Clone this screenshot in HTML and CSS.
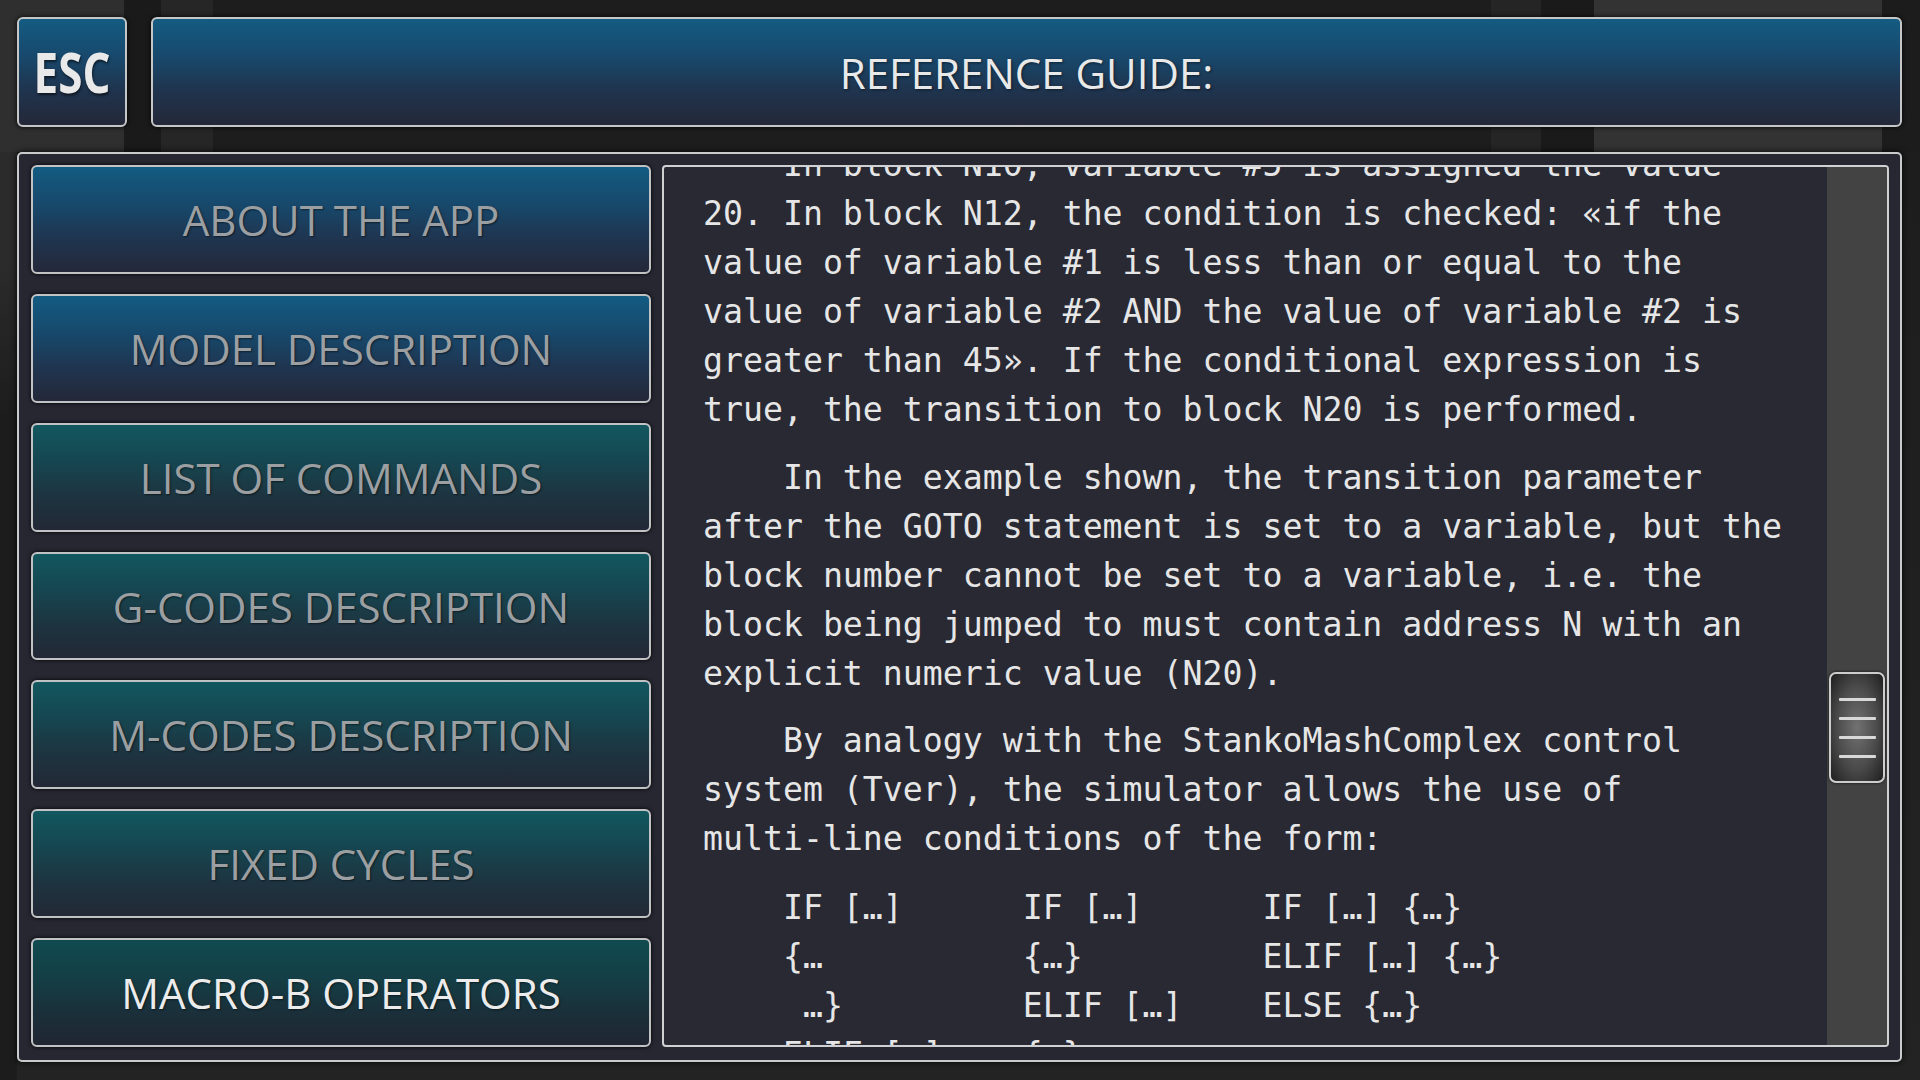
FILE: index.html
```html
<!DOCTYPE html>
<html lang="en">
<head>
<meta charset="utf-8">
<title>Reference Guide</title>
<link rel="stylesheet" href="styles.css">
</head>
<body>
<header class="top">
  <div class="esc"><span class="esc-label">ESC</span></div>
  <div class="title">REFERENCE GUIDE:</div>
</header>
<main class="panel">
  <nav class="menu">
    <div class="btn blue">ABOUT THE APP</div>
    <div class="btn blue">MODEL DESCRIPTION</div>
    <div class="btn teal">LIST OF COMMANDS</div>
    <div class="btn teal">G-CODES DESCRIPTION</div>
    <div class="btn teal">M-CODES DESCRIPTION</div>
    <div class="btn teal">FIXED CYCLES</div>
    <div class="btn teal active">MACRO-B OPERATORS</div>
  </nav>
  <section class="viewer">
    <div class="text">
      <p class="para">In block N10, variable #5 is assigned the value 20. In block N12, the condition is checked: «if the value of variable #1 is less than or equal to the value of variable #2 AND the value of variable #2 is greater than 45». If the conditional expression is true, the transition to block N20 is performed.</p>
      <p class="para">In the example shown, the transition parameter after the GOTO statement is set to a variable, but the block number cannot be set to a variable, i.e. the block being jumped to must contain address N with an explicit numeric value (N20).</p>
      <p class="para">By analogy with the StankoMashComplex control system (Tver), the simulator allows the use of <span class="nowrap">multi-line</span> conditions of the form:</p>
<pre class="code">    IF […]      IF […]      IF […] {…}
    {…          {…}         ELIF […] {…}
     …}         ELIF […]    ELSE {…}
    ELIF […]    {…}
    {…          ELSE {…}
     …}</pre>
    </div>
    <div class="track">
      <div class="thumb"><i></i><i></i><i></i><i></i></div>
    </div>
  </section>
</main>
</body>
</html>
```
FILE: styles.css
```css
html, body {
  margin: 0;
  padding: 0;
}
body {
  width: 1920px;
  height: 1080px;
  overflow: hidden;
  font-family: "Open Sans", "Noto Sans", sans-serif;
  background-color: #1e1e1e;
  background-image:
    linear-gradient(to right,
      #2f2f2f 0, #2f2f2f 124px,
      #1a1a1a 124px, #1a1a1a 161px,
      #262626 161px, #262626 213px,
      #1d1d1d 213px, #1d1d1d 1491px,
      #252525 1491px, #252525 1541px,
      #1a1a1a 1541px, #1a1a1a 1594px,
      #333333 1594px, #333333 1882px,
      #1c1c1c 1882px, #1c1c1c 1920px),
    linear-gradient(to bottom, #2b2b2b 0, #2b2b2b 260px, #1c1c1c 420px, #1c1c1c 100%),
    linear-gradient(to bottom, #1c1c1c 0, #232323 100%);
  background-size: 100% 152px, 17px 100%, 100% 100%;
  background-position: 0 0, 0 0, 0 0;
  background-repeat: no-repeat;
}

.top {
  display: flex;
  gap: 24px;
  padding: 17px 18px 0 17px;
  height: 110px;
}

.esc, .title {
  box-sizing: border-box;
  border: 2px solid #c4c6c8;
  border-radius: 6px;
  background: linear-gradient(to bottom, #145b82 0%, #18496d 35%, #1f3550 65%, #242838 100%);
  box-shadow: 0 0 5px rgba(0, 0, 0, 0.9);
  display: flex;
  align-items: center;
  justify-content: center;
  color: #e9e9e9;
}
.esc {
  width: 110px;
  height: 110px;
}
.esc-label {
  display: inline-block;
  font-weight: 700;
  font-size: 55px;
  line-height: 1;
  transform: scaleX(0.8);
  text-shadow: 1px 2px 3px rgba(0, 0, 0, 0.6);
  margin-top: -2px;
}
.title {
  flex: 1;
  height: 110px;
  font-size: 42px;
  text-shadow: 1px 1px 3px rgba(0, 0, 0, 0.5);
}

.panel {
  box-sizing: border-box;
  margin: 25px 18px 0 17px;
  height: 910px;
  border: 2px solid #c9cacc;
  border-radius: 5px;
  background: #262731;
  box-shadow: 0 0 6px rgba(0, 0, 0, 0.9);
  padding: 11px 11px 13px 12px;
  display: flex;
  gap: 11px;
}

.menu {
  width: 620px;
  display: flex;
  flex-direction: column;
  gap: 20px;
}
.btn {
  box-sizing: border-box;
  height: 109px;
  border: 2px solid #c0c2c4;
  border-radius: 6px;
  box-shadow: 0 0 4px rgba(0, 0, 0, 0.9);
  display: flex;
  align-items: center;
  justify-content: center;
  font-size: 42px;
  color: #9c9fa2;
  text-shadow: 1px 1px 2px rgba(0, 0, 0, 0.5);
}
.btn.blue {
  background: linear-gradient(to bottom, #135b82 0%, #17496c 35%, #1f3550 68%, #242839 100%);
}
.btn.teal {
  background: linear-gradient(to bottom, #12575f 0%, #164650 35%, #1d3440 68%, #232836 100%);
}
.btn.active {
  color: #ececec;
  background: linear-gradient(to bottom, #104a4f 0%, #143f46 35%, #1a303a 68%, #202632 100%);
}

.viewer {
  flex: 1;
  box-sizing: border-box;
  border: 2px solid #cfd0d2;
  border-radius: 4px;
  background: #282933;
  display: flex;
  overflow: hidden;
}
.text {
  flex: 1;
  overflow: hidden;
  padding-left: 39px;
  font-family: "DejaVu Sans Mono", "Liberation Mono", monospace;
  font-size: 33.2px;
  line-height: 49px;
  color: #e6e6e6;
}
.para {
  width: 54.5ch;
  margin: 0 0 18.5px 0;
  text-indent: 4ch;
}
.para:first-child {
  margin-top: -27px;
}
.nowrap {
  white-space: nowrap;
}
.code {
  margin: 0;
  padding-top: 1px;
  font: inherit;
  line-height: 49px;
}

.track {
  width: 60px;
  background: #434343;
  display: flex;
  flex-direction: column;
  align-items: center;
}
.thumb {
  box-sizing: border-box;
  margin-top: 505px;
  width: 56px;
  height: 111px;
  border: 2px solid #cdcdcd;
  border-radius: 7px;
  background: radial-gradient(ellipse at center, #727272 0%, #4a4a4a 55%, #1e1e1e 100%);
  box-shadow: 0 0 3px rgba(0, 0, 0, 0.8);
  display: flex;
  flex-direction: column;
  align-items: center;
  padding-top: 24px;
  gap: 16px;
}
.thumb i {
  display: block;
  width: 37px;
  height: 3px;
  background: #d8d8d8;
  border-radius: 1px;
}
```
